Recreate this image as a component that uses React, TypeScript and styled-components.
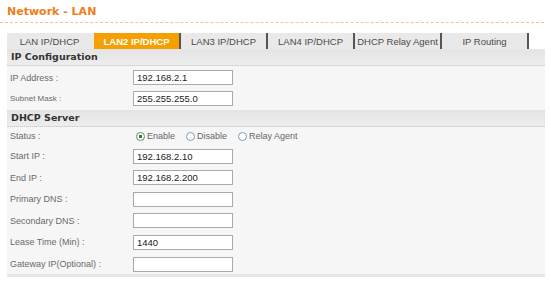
import styled, { createGlobalStyle } from 'styled-components';

const Global = createGlobalStyle`
  html, body {
    margin: 0;
    padding: 0;
    background: #ffffff;
  }
  body {
    font-family: "Liberation Sans", Arial, sans-serif;
  }
`;

const tabs = [
  'LAN IP/DHCP',
  'LAN2 IP/DHCP',
  'LAN3 IP/DHCP',
  'LAN4 IP/DHCP',
  'DHCP Relay Agent',
  'IP Routing',
];

interface FieldProps {
  label: string;
  value?: string;
  small?: boolean;
}

function Field({ label, value, small }: FieldProps) {
  return (
    <Row>
      <Label small={small}>{label}</Label>
      <Input defaultValue={value ?? ''} />
    </Row>
  );
}

export default function App() {
  return (
    <Page>
      <Global />
      <Title>Network - LAN</Title>
      <TabBar>
        {tabs.map((t, i) => (
          <Tab key={t} active={i === 1} first={i === 0}>
            {t}
          </Tab>
        ))}
      </TabBar>
      <Panel>
        <SectionHead>IP Configuration</SectionHead>
        <Rows top={4} gap={6}>
          <Field label="IP Address :" value="192.168.2.1" />
          <Field label="Subnet Mask :" value="255.255.255.0" small />
        </Rows>
        <SectionHead>DHCP Server</SectionHead>
        <Rows top={3} gap={6.6}>
          <Row short>
            <Label>Status :</Label>
            <Radios>
              <RadioOpt>
                <Dot checked />
                Enable
              </RadioOpt>
              <RadioOpt>
                <Dot />
                Disable
              </RadioOpt>
              <RadioOpt>
                <Dot />
                Relay Agent
              </RadioOpt>
            </Radios>
          </Row>
          <Field label="Start IP :" value="192.168.2.10" />
          <Field label="End IP :" value="192.168.2.200" />
          <Field label="Primary DNS :" />
          <Field label="Secondary DNS :" />
          <Field label="Lease Time (Min) :" value="1440" />
          <Field label="Gateway IP(Optional) :" />
        </Rows>
      </Panel>
    </Page>
  );
}

const Page = styled.div`
  width: 551px;
  height: 281px;
  padding: 5px 6px 0 7px;
  box-sizing: border-box;
  overflow: hidden;
`;

const Title = styled.div`
  font-family: "DejaVu Sans", Verdana, sans-serif;
  font-weight: bold;
  font-size: 11px;
  color: #f07d1a;
  height: 16px;
  line-height: 14px;
  padding: 0 0 1px 7px;
  margin: 0 0 0 -7px;
  border-bottom: 1px dashed #f5c48a;
  width: 537px;
`;

const TabBar = styled.div`
  display: flex;
  margin-top: 10px;
  height: 16px;
  width: 522px;
`;

const Tab = styled.div<{ active?: boolean; first?: boolean }>`
  flex: 1;
  display: flex;
  align-items: center;
  justify-content: center;
  font-size: 9.5px;
  color: ${(p) => (p.active ? '#ffffff' : '#4a4a4a')};
  font-weight: ${(p) => (p.active ? 'bold' : 'normal')};
  background: ${(p) => (p.active ? '#f5a000' : '#e9e9e9')};
  border-right: 2px solid ${(p) => (p.first ? '#e9e9e9' : '#555')};
  box-sizing: border-box;
  white-space: nowrap;
`;

const Panel = styled.div`
  width: 538px;
  height: 228px;
  background: #f6f6f6;
  border-bottom: 3px solid #e6e6e6;
  box-sizing: border-box;
`;

const SectionHead = styled.div`
  font-family: "DejaVu Sans", Verdana, sans-serif;
  font-weight: bold;
  font-size: 9.5px;
  color: #333;
  height: 16px;
  line-height: 16px;
  padding-left: 4px;
  background: linear-gradient(#e4e4e4, #ededed);
  border-bottom: 1px dotted #c8c8c8;
`;

const Rows = styled.div<{ top: number; gap: number }>`
  display: flex;
  flex-direction: column;
  padding: ${(p) => p.top}px 0 4px 0;
  gap: ${(p) => p.gap}px;
`;

const Row = styled.div<{ short?: boolean }>`
  display: flex;
  align-items: center;
  height: ${(p) => (p.short ? '12px' : '15px')};
`;

const Label = styled.div<{ small?: boolean }>`
  width: 123px;
  padding-left: 3px;
  font-size: ${(p) => (p.small ? '8px' : '9px')};
  color: #6a6a6a;
`;

const Input = styled.input`
  width: 100px;
  height: 15px;
  box-sizing: border-box;
  border: 1px solid #a9a9a9;
  background: #fff;
  padding: 0 3px;
  margin: 0;
  font-family: "Liberation Sans", Arial, sans-serif;
  font-size: 9.5px;
  color: #222;
  outline: none;
`;

const Radios = styled.div`
  display: flex;
  align-items: center;
  gap: 11px;
  padding-left: 3px;
`;

const RadioOpt = styled.span`
  display: flex;
  align-items: center;
  gap: 1px;
  font-size: 9px;
  color: #666;
`;

const Dot = styled.span<{ checked?: boolean }>`
  width: 7px;
  height: 7px;
  border-radius: 50%;
  border: 1px solid ${(p) => (p.checked ? '#5b8f5b' : '#7a9cc0')};
  background: ${(p) =>
    p.checked ? 'radial-gradient(circle, #3b7a3b 0 1.6px, #fff 2px)' : '#fff'};
  display: inline-block;
  margin-right: 1px;
`;
